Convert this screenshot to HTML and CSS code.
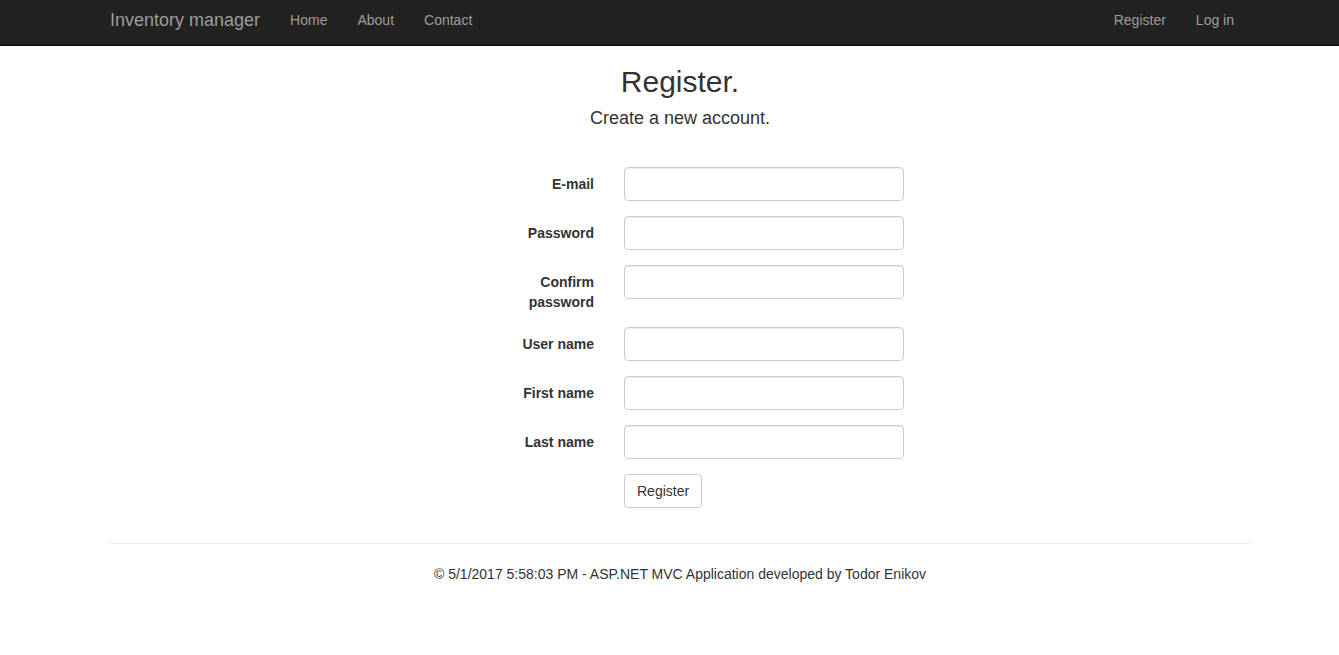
FILE: index.html
```html
<!DOCTYPE html>
<html lang="en">
<head>
<meta charset="utf-8">
<title>Register - Inventory manager</title>
<link rel="stylesheet" href="styles.css">
</head>
<body>
<nav class="navbar">
  <div class="container nav-inner">
    <div class="nav-left">
      <a class="brand" href="#">Inventory manager</a>
      <ul class="nav">
        <li><a href="#">Home</a></li>
        <li><a href="#">About</a></li>
        <li><a href="#">Contact</a></li>
      </ul>
    </div>
    <ul class="nav">
      <li><a href="#">Register</a></li>
      <li><a href="#">Log in</a></li>
    </ul>
  </div>
</nav>
<div class="container body-content">
  <h2 class="title">Register.</h2>
  <h4 class="subtitle">Create a new account.</h4>
  <form class="form">
    <div class="form-group">
      <label class="label">E-mail</label>
      <div class="field"><input class="input" type="text"></div>
    </div>
    <div class="form-group">
      <label class="label">Password</label>
      <div class="field"><input class="input" type="password"></div>
    </div>
    <div class="form-group">
      <label class="label">Confirm password</label>
      <div class="field"><input class="input" type="password"></div>
    </div>
    <div class="form-group">
      <label class="label">User name</label>
      <div class="field"><input class="input" type="text"></div>
    </div>
    <div class="form-group">
      <label class="label">First name</label>
      <div class="field"><input class="input" type="text"></div>
    </div>
    <div class="form-group">
      <label class="label">Last name</label>
      <div class="field"><input class="input" type="text"></div>
    </div>
    <div class="form-group">
      <div class="label"></div>
      <div class="field"><button class="btn" type="button">Register</button></div>
    </div>
  </form>
  <hr class="rule">
  <footer class="footer">
    <p>&copy; 5/1/2017 5:58:03 PM - ASP.NET MVC Application developed by Todor Enikov</p>
  </footer>
</div>
</body>
</html>
```

FILE: styles.css
```css
* { box-sizing: border-box; }
html, body { margin: 0; padding: 0; }
body {
  font-family: "Liberation Sans", Arial, Helvetica, sans-serif;
  font-size: 14px;
  line-height: 20px;
  color: #333;
  background: #fff;
}
a { text-decoration: none; }

.navbar {
  background: #222;
  border-bottom: 1px solid #080808;
  height: 46px;
}
.container {
  width: 1140px;
  margin-left: 110px;
}
.nav-inner {
  display: flex;
  justify-content: space-between;
}
.nav-left { display: flex; }
.brand {
  display: block;
  margin-left: -15px;
  padding: 10px 15px 0;
  font-size: 18px;
  line-height: 20px;
  color: #9d9d9d;
}
.nav {
  list-style: none;
  margin: 0;
  padding: 0;
  display: flex;
}
.nav a {
  display: block;
  padding: 10px 15px 0;
  line-height: 20px;
  color: #9d9d9d;
}
.nav-inner > .nav { margin-right: 1px; }

.title {
  margin: 19px 0 10px;
  font-size: 30px;
  font-weight: 500;
  line-height: 33px;
  text-align: center;
  color: #333;
}
.subtitle {
  margin: 7px 0 39px;
  font-size: 18px;
  font-weight: 500;
  line-height: 20px;
  text-align: center;
  color: #333;
}

.form {
  display: flow-root;
  margin-left: 369px;
}
.form-group {
  display: flex;
  margin-bottom: 15px;
}
.label {
  width: 130px;
  padding: 7px 15px 0;
  text-align: right;
  font-weight: bold;
  line-height: 20px;
  color: #333;
}
.field {
  padding-left: 15px;
}
.input {
  display: block;
  width: 280px;
  height: 34px;
  padding: 6px 12px;
  font-family: inherit;
  font-size: 14px;
  color: #555;
  background: #fff;
  border: 1px solid #ccc;
  border-radius: 4px;
  box-shadow: inset 0 1px 1px rgba(0,0,0,0.075);
  margin: 0;
}
.btn {
  display: block;
  height: 34px;
  padding: 6px 12px;
  font-family: inherit;
  font-size: 14px;
  line-height: 20px;
  color: #333;
  background: #fff;
  border: 1px solid #ccc;
  border-radius: 4px;
  margin: 0;
}

.rule {
  margin: 20px 0;
  border: 0;
  border-top: 1px solid #eee;
  height: 0;
}
.footer p {
  margin: 0 0 10px;
  text-align: center;
}
```
